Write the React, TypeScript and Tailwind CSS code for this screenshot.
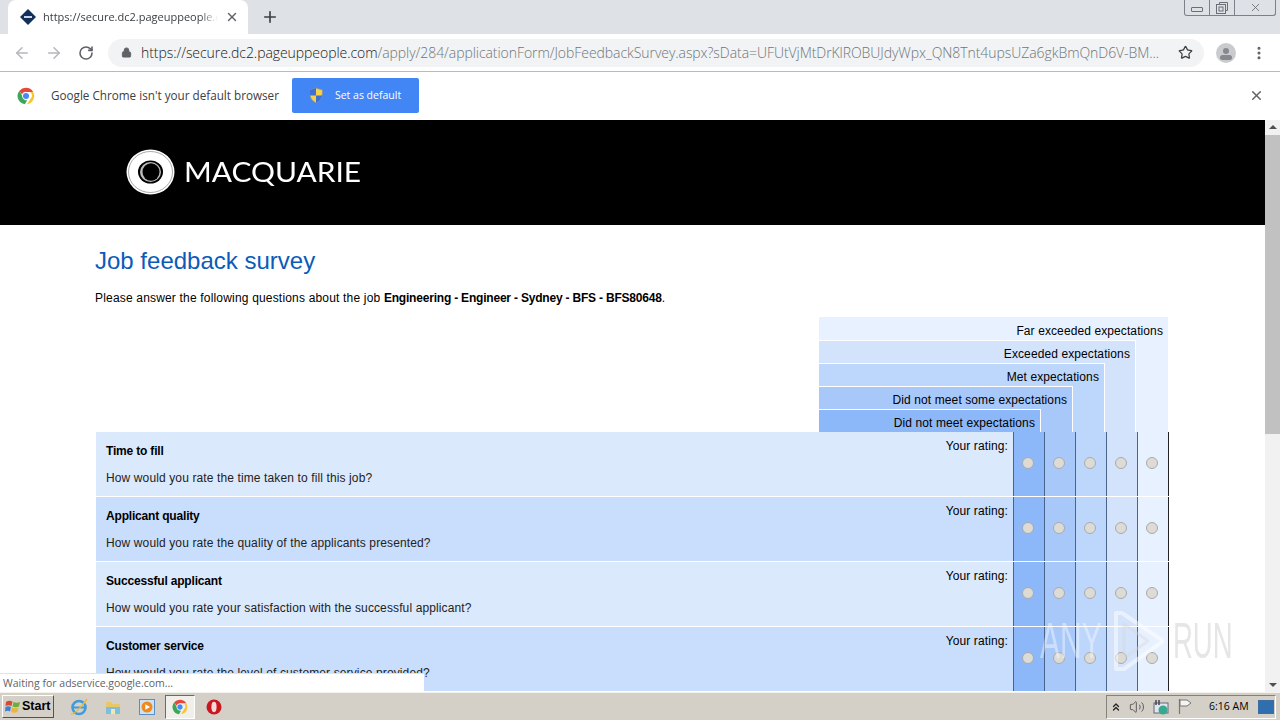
import React from 'react';
import { ArrowLeft, ArrowRight, ChevronsUp, Lock, MoreVertical, Plus, RotateCw, Star, Volume2, X } from 'lucide-react';

const levels = [
    { label: 'Far exceeded expectations', cls: 'col-span-5 row-start-1 bg-[#e8f1ff] pt-[6px]' },
    { label: 'Exceeded expectations', cls: 'col-span-4 row-start-2 bg-[#d3e3fc] border-t border-r border-white pt-[5px]' },
    { label: 'Met expectations', cls: 'col-span-3 row-start-3 bg-[#bdd6fb] border-t border-r border-white pt-[5px]' },
    { label: 'Did not meet some expectations', cls: 'col-span-2 row-start-4 bg-[#a8c8fa] border-t border-r border-white pt-[5px]' },
    { label: 'Did not meet expectations', cls: 'col-span-1 row-start-5 bg-[#8cb7f8] border-t border-r border-white pt-[5px]' },
];

const fillers = [
    'col-start-5 row-start-2 row-span-4 bg-[#e8f1ff]',
    'col-start-4 row-start-3 row-span-3 bg-[#d3e3fc] border-r border-white',
    'col-start-3 row-start-4 row-span-2 bg-[#bdd6fb] border-r border-white',
    'col-start-2 row-start-5 bg-[#a8c8fa] border-r border-white',
];

const cells = ['bg-[#8cb7f8]', 'bg-[#a8c8fa]', 'bg-[#bdd6fb]', 'bg-[#d3e3fc]', 'bg-[#e8f1ff]'];

const questions = [
    { title: 'Time to fill', text: 'How would you rate the time taken to fill this job?', bg: 'bg-[#dbe9fd]' },
    { title: 'Applicant quality', text: 'How would you rate the quality of the applicants presented?', bg: 'bg-[#c9defc]' },
    { title: 'Successful applicant', text: 'How would you rate your satisfaction with the successful applicant?', bg: 'bg-[#dbe9fd]' },
    { title: 'Customer service', text: 'How would you rate the level of customer service provided?', bg: 'bg-[#c9defc]' },
];

function ChromeLogo({ size }: { size: number }) {
    return (
        <svg width={size} height={size} viewBox="0 0 48 48">
            <path d="M24 2a22 22 0 0 1 19 11H24a11 11 0 0 0-10.500 7.500L6.500 10A22 22 0 0 1 24 2z" fill="#e5483a" />
            <path d="M43 13a22 22 0 0 1-16 32.800L36 31a11 11 0 0 0-1-18z" fill="#f8c430" />
            <path d="M6.500 10 16 28a11 11 0 0 0 11 7.500L21 45.800A22 22 0 0 1 6.500 10z" fill="#3ba757" />
            <circle cx="24" cy="24" r="10" fill="#fff" />
            <circle cx="24" cy="24" r="8" fill="#4a89f3" />
        </svg>
    );
}

function Shield() {
    return (
        <svg width="16" height="17" viewBox="0 0 16 17">
            <path d="M8 1 14.500 3c0 6 -1 10-6.500 13C2.500 13 1.500 9 1.500 3z" fill="#f4d24b" stroke="#8a8f9a" strokeWidth="0.8" />
            <path d="M8 1v7.500H1.700C1.500 7 1.500 5 1.500 3z" fill="#3f6fd1" />
            <path d="M8 8.500h6c-.6 3.400-2.300 5.700-6 7.500z" fill="#3f6fd1" />
        </svg>
    );
}

function TaskIcons() {
    return (
        <div className="flex items-center">
            <svg className="ml-[15px]" width="20" height="20" viewBox="0 0 20 20">
                <circle cx="10" cy="10.500" r="6.500" fill="none" stroke="#3f9bdc" strokeWidth="2.600" />
                <path d="M4 10.500h12.500" stroke="#3f9bdc" strokeWidth="2" />
                <path d="M2 17C5 18 14 8 18 2" stroke="#e8b93a" strokeWidth="1.400" fill="none" />
            </svg>
            <svg className="ml-[16px]" width="16" height="18" viewBox="0 0 16 18">
                <path d="M1 4h5l1 2h8v10H1z" fill="#e9c766" />
                <rect x="1" y="9" width="14" height="7" fill="#7cc0dd" />
                <rect x="6" y="11" width="4" height="5" fill="#f3e6b0" />
            </svg>
            <svg className="ml-[18px]" width="16" height="16" viewBox="0 0 16 16">
                <rect x="0.500" y="0.500" width="15" height="15" fill="#cfe2f5" stroke="#5a8fc4" />
                <circle cx="8" cy="8" r="5.500" fill="#ee8a1e" />
                <path d="M6.300 5.200 11 8l-4.700 2.800z" fill="#fff" />
            </svg>
            <div className="ml-[10px] flex h-[24px] w-[30px] items-center justify-center border border-t-[#6d6a64] border-l-[#6d6a64] border-r-white border-b-white bg-[#f1efea]">
                <ChromeLogo size={16} />
            </div>
            <svg className="ml-[11px]" width="16" height="16" viewBox="0 0 16 16">
                <circle cx="8" cy="8" r="7.500" fill="#c9171e" />
                <ellipse cx="8" cy="8" rx="2.600" ry="5.200" fill="#f6dada" />
            </svg>
        </div>
    );
}

export default function App() {
    return (
        <div className="relative flex h-[720px] w-[1280px] flex-col overflow-hidden bg-white font-['Liberation_Sans',sans-serif]">
            {/* tab strip */}
            <div className="flex h-[34px] shrink-0 items-end bg-[#dee1e6] pl-[8px]">
                <div className="flex h-[34px] w-[240px] items-center rounded-t-[8px] bg-white pl-[12px]">
                    <svg width="16" height="16" viewBox="0 0 16 16">
                        <path d="M8 0 16 8 8 16 0 8z" fill="#12305a" />
                        <rect x="4" y="7" width="8" height="2" fill="#c8d6e8" />
                    </svg>
                    <span className="ml-[7px] w-[175px] overflow-hidden whitespace-nowrap font-['Open_Sans',sans-serif] text-[11px] text-[#3c4043] [mask-image:linear-gradient(to_right,black_90%,transparent)]">
                        https://secure.dc2.pageuppeople.com
                    </span>
                    <X size={14} strokeWidth={2.4} className="ml-[7px] text-[#5f6368]" />
                </div>
                <Plus size={18} strokeWidth={2.2} className="mb-[8px] ml-[13px] text-[#3c4043]" />
                <div className="mb-[18px] ml-auto mr-[4px] flex h-[16px] w-[92px] self-start rounded-b-[3px] border border-t-0 border-[#7c8088] text-[#6a6e76]">
                    <div className="flex w-[25px] items-end justify-center border-r border-[#7c8088] pb-[3px]">
                        <div className="h-[5px] w-[12px] rounded-[1px] border border-[#6a6e76]" />
                    </div>
                    <div className="flex w-[25px] items-center justify-center border-r border-[#7c8088]">
                        <svg width="12" height="12" viewBox="0 0 12 12" fill="none" stroke="#6a6e76">
                            <path d="M3.500 2.500v-2h8v8h-2" />
                            <rect x="0.500" y="2.500" width="9" height="9" />
                            <rect x="3" y="5" width="4" height="4" />
                        </svg>
                    </div>
                    <div className="flex flex-1 items-center justify-center">
                        <X size={13} strokeWidth={1.6} />
                    </div>
                </div>
            </div>

            {/* toolbar */}
            <div className="flex h-[38px] shrink-0 items-center border-b border-[#b8babd] pl-[13px]">
                <ArrowLeft size={18} className="text-[#b4b7bb]" />
                <ArrowRight size={18} className="ml-[14px] text-[#b4b7bb]" />
                <RotateCw size={16} strokeWidth={2.4} className="ml-[15px] text-[#5f6368]" />
                <div className="ml-[14px] flex h-[28px] w-[1096px] items-center rounded-full bg-[#f1f3f4] pl-[13px]">
                    <Lock size={11} fill="#5f6368" className="text-[#5f6368]" />
                    <span className="ml-[9px] w-[1022px] overflow-hidden whitespace-nowrap font-['Open_Sans',sans-serif] text-[14px] font-light tracking-[-0.06px] text-[#70757a]">
                        <span className="text-[#202124]">https://secure.dc2.pageuppeople.com</span>/apply/284/applicationForm/JobFeedbackSurvey.aspx?sData=UFUtVjMtDrKlROBUJdyWpx_QN8Tnt4upsUZa6gkBmQnD6V-BM...
                    </span>
                    <Star size={15} strokeWidth={2} className="ml-[15px] text-[#3c4043]" />
                </div>
                <div className="ml-[12px] flex h-[20px] w-[20px] flex-col items-center justify-end overflow-hidden rounded-full bg-[#c9cbce]">
                    <div className="mb-px h-[6px] w-[6px] rounded-full bg-[#85888c]" />
                    <div className="mb-[3px] h-[5px] w-[12px] rounded-full bg-[#85888c]" />
                </div>
                <MoreVertical size={16} strokeWidth={2.6} className="ml-[15px] text-[#5f6368]" />
            </div>

            {/* default browser bar */}
            <div className="flex h-[48px] shrink-0 items-center pb-px pl-[17px]">
                <ChromeLogo size={18} />
                <span className="ml-[16px] font-['Open_Sans',sans-serif] text-[11.700px] text-[#3c4043]">
                    Google Chrome isn't your default browser
                </span>
                <div className="ml-[13px] flex h-[35px] w-[127px] items-center rounded-[2px] bg-[#4285f4] pl-[16px] font-['Open_Sans',sans-serif] text-[10.500px] text-white">
                    <Shield />
                    <span className="ml-[11px]">Set as default</span>
                </div>
                <X size={15} strokeWidth={2.4} className="ml-auto mr-[16px] text-[#5f6368]" />
            </div>

            {/* page */}
            <div className="relative flex min-h-0 flex-1 overflow-hidden">
                <div className="w-[1265px] shrink-0">
                    <div className="flex h-[105px] items-center bg-black pb-[1px] pl-[126px]">
                        <svg width="49" height="46" viewBox="0 0 49 46">
                            <ellipse cx="24.500" cy="23" rx="24" ry="22.500" fill="#fff" />
                            <ellipse cx="24.500" cy="23" rx="22" ry="20.500" fill="none" stroke="#555" strokeWidth="0.5" />
                            <ellipse cx="24.500" cy="23" rx="12.500" ry="11.500" fill="#000" />
                            <ellipse cx="24.500" cy="23" rx="10.500" ry="10" fill="#bbb" />
                            <ellipse cx="25" cy="23" rx="8.500" ry="8.800" fill="#000" />
                        </svg>
                        <span className="ml-[9px] origin-left scale-x-[1.15] font-['Lato',sans-serif] text-[26px] font-normal leading-none text-white">
                            MACQUARIE
                        </span>
                    </div>
                    <div className="pl-[95px] text-[12px] text-black">
                        <h1 className="mt-[21px] text-[24px] leading-[30px] text-[#0a5cb8]">Job feedback survey</h1>
                        <p className="mt-[14px] leading-[16px] tracking-[0.18px]">
                            Please answer the following questions about the job <b className="tracking-[-0.2px]">Engineering - Engineer - Sydney - BFS - BFS80648</b>.
                        </p>
                        <div className="ml-[724px] mt-[11px] grid w-[349px] grid-cols-[222px_32px_32px_31px_32px] grid-rows-[repeat(5,23px)]">
                            {levels.map((level) => (
                                <div key={level.label} className={`${level.cls} pr-[5px] text-right leading-[16px] tracking-[0.1px]`}>
                                    {level.label}
                                </div>
                            ))}
                            {fillers.map((filler) => (
                                <div key={filler} className={filler} />
                            ))}
                        </div>
                        <div className="ml-px w-[1073px]">
                            {questions.map((q) => (
                                <div key={q.title} className={`${q.bg} flex h-[65px] border-b border-white`}>
                                    <div className="flex-1 pl-[10px] pt-[12px]">
                                        <div className="font-bold leading-[15px] tracking-[-0.18px]">{q.title}</div>
                                        <div className="mt-[12px] leading-[15px] tracking-[0.12px] text-[#222]">{q.text}</div>
                                    </div>
                                    <div className="pr-[5px] pt-[7px] leading-[15px] tracking-[0.12px]">Your rating:</div>
                                    {cells.map((cell) => (
                                        <div key={cell} className={`${cell} flex w-[31px] items-center justify-center border-l border-[#49658c] pb-[2px] pr-[2px] last:w-[32px] last:border-r last:border-r-[#222]`}>
                                            <input type="radio" disabled className="h-[12px] w-[12px] appearance-none rounded-full border border-[#aaa] bg-[#dcdbd6]" />
                                        </div>
                                    ))}
                                </div>
                            ))}
                        </div>
                    </div>
                </div>

                {/* scrollbar */}
                <div className="flex w-[15px] flex-col items-center bg-[#f1f1f1]">
                    <div className="mt-[5px] h-0 w-0 border-x-[4px] border-b-[4px] border-x-transparent border-b-[#505050]" />
                    <div className="mt-[6px] h-[299px] w-full bg-[#c1c1c1]" />
                    <div className="mb-[5px] mt-auto h-0 w-0 border-x-[4px] border-t-[4px] border-x-transparent border-t-[#505050]" />
                </div>

                {/* loading status */}
                <div className="absolute bottom-0 left-0 h-[19px] w-[424px] border-t border-[#e3e3e3] bg-white pl-[3px] font-['Open_Sans',sans-serif] text-[10.500px] leading-[18px] text-[#5f6368]">
                    Waiting for adservice.google.com...
                </div>

                {/* watermark */}
                <div className="absolute left-[1040px] top-[490px] flex h-[62px] items-center whitespace-nowrap text-[50px] leading-none">
                    <div className="w-[62px]">
                        <span className="block origin-left scale-x-[0.6] text-white/40">ANY</span>
                    </div>
                    <svg className="ml-[10px]" width="53" height="62" viewBox="0 0 53 62">
                        <path d="M4 3h6l40 27a1.500 1.500 0 0 1 0 2L12 59H4z" fill="none" stroke="#fff" strokeOpacity="0.5" strokeWidth="4" strokeLinejoin="round" />
                        <path d="M12 14v34l24-17z" fill="none" stroke="#d8d8d8" strokeOpacity="0.4" strokeWidth="3" strokeLinejoin="round" />
                    </svg>
                    <div className="ml-[8px] w-[59px]">
                        <span className="block origin-left scale-x-[0.55] text-[#dcdcdc]/70">RUN</span>
                    </div>
                </div>
            </div>

            {/* taskbar */}
            <div className="flex h-[28px] shrink-0 items-center border-t border-[#f4f2ec] bg-[#d4d0c8] pl-[2px]">
                <div className="flex h-[23px] w-[52px] items-center border border-t-white border-l-white border-r-[#55524c] border-b-[#55524c] pl-[2px] text-[12.500px] font-bold text-black">
                    <svg width="17" height="16" viewBox="0 0 17 16">
                        <path d="M1 3c2-1.500 4-1.500 6.500-.5L6.500 7C4 6 3 6 .5 7z" fill="#d9492f" />
                        <path d="M8.500 3c2.500 1 4 1 6.500 0l-1 4.500c-2.500 1-4 1-6.500 0z" fill="#6eae3e" />
                        <path d="M.5 8c2-1 3.500-1 5.500 0l-1 4.500C3.500 11.500 2 11.500 0 12.500z" fill="#3f7fd0" />
                        <path d="M7 8.500c2.500 1 4 1 6.500 0l-1 4.500c-2.500 1-4 1-6.500 0z" fill="#e9b83a" />
                    </svg>
                    <span>Start</span>
                </div>
                <TaskIcons />
                <div className="ml-auto mr-[4px] flex h-[24px] w-[170px] items-center border border-t-[#85827b] border-l-[#85827b] border-r-white border-b-white pl-[2px] text-[#222]">
                    <ChevronsUp size={12} strokeWidth={2.6} className="ml-px" />
                    <Volume2 size={16} strokeWidth={1.4} className="ml-[7px] text-[#555]" />
                    <svg className="ml-[8px]" width="16" height="16" viewBox="0 0 16 16">
                        <rect x="1" y="4" width="14" height="10" fill="#dfe7ee" stroke="#667" />
                        <circle cx="10" cy="11" r="4.500" fill="#39a88f" />
                        <path d="M3 1v5M6 1v5" stroke="#445" strokeWidth="1.500" />
                    </svg>
                    <svg className="ml-[8px]" width="17" height="17" viewBox="0 0 17 17">
                        <path d="M2.500 1v15" stroke="#777" strokeWidth="1.200" />
                        <path d="M3 2h7l4 3-4 3H3z" fill="#f4f4f2" stroke="#777" />
                    </svg>
                    <span className="ml-[15px] whitespace-nowrap font-['Open_Sans',sans-serif] text-[10.500px] text-black">6:16 AM</span>
                    <div className="ml-auto mr-px h-[14px] w-[16px] border border-[#3a6ea5] bg-[#2f6fb0]" />
                </div>
            </div>
        </div>
    );
}
